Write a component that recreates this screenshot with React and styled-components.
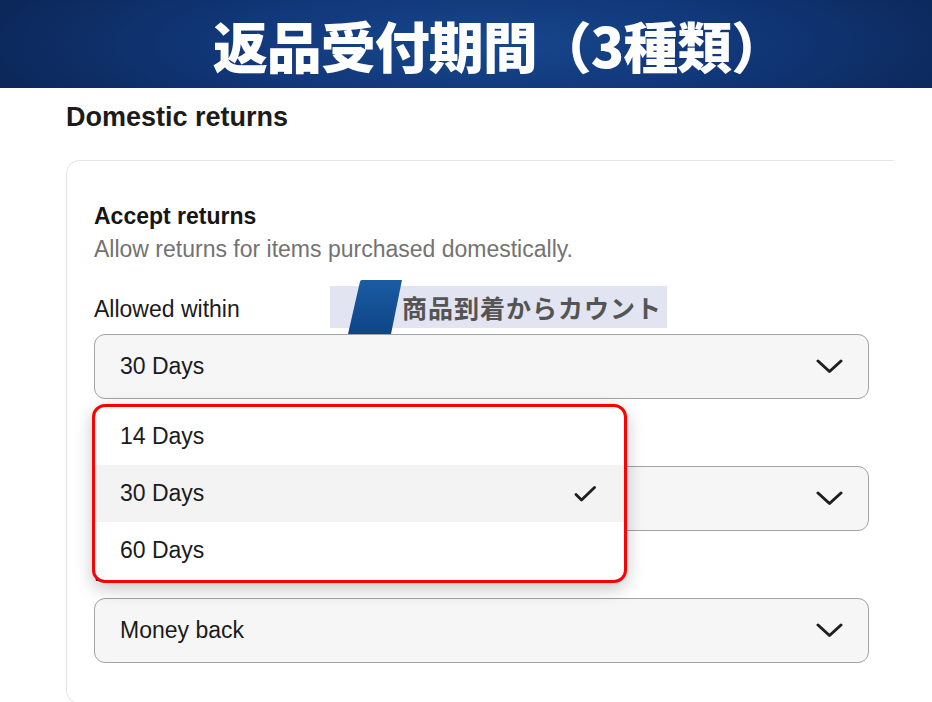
import React from "react";
import styled, { createGlobalStyle } from "styled-components";

const GlobalStyle = createGlobalStyle`
  html, body { margin: 0; padding: 0; background: #ffffff; }
  body { font-family: "Liberation Sans", Arial, sans-serif; color: #1b1b1b; }
  * { box-sizing: border-box; }
`;

const Page = styled.div`
  width: 932px;
  height: 702px;
  overflow: hidden;
  background: #fff;
`;

const Banner = styled.header`
  height: 88px;
  display: flex;
  align-items: center;
  justify-content: center;
  padding-left: 66px;
  background: radial-gradient(ellipse 60% 140% at 52% 50%, #17478d 0%, #11387a 45%, #0b2453 100%);
`;

const BannerTitle = styled.h1`
  margin: 0;
  font-family: "Noto Sans CJK JP", "Noto Sans", sans-serif;
  font-weight: 900;
  font-size: 55px;
  line-height: 1;
  color: #ffffff;
  letter-spacing: -1px;
`;

const Content = styled.main`
  padding: 13px 0 0 66px;
`;

const SectionHeading = styled.h2`
  margin: 0;
  font-size: 27px;
  line-height: 32px;
  font-weight: 700;
  color: #1b1b1b;
`;

const Card = styled.section`
  margin-top: 27px;
  width: 828px;
  border: 1.5px solid #e6e6e6;
  border-right: none;
  border-radius: 14px 0 0 14px;
  padding: 41px 0 40px 27px;
`;

const CardTitle = styled.h3`
  margin: 0;
  font-size: 23px;
  line-height: 28px;
  font-weight: 700;
  color: #151515;
`;

const CardDesc = styled.p`
  margin: 5px 0 0;
  font-size: 23px;
  line-height: 28px;
  color: #737373;
`;

const Fields = styled.div`
  margin-top: 32px;
  width: 775px;
  display: flex;
  flex-direction: column;
  gap: 28px;
`;

const Field = styled.div`
  position: relative;
  display: flex;
  flex-direction: column;
  gap: 11px;
`;

const FieldLabel = styled.label`
  font-size: 23px;
  line-height: 28px;
  color: #1b1b1b;
`;

const Select = styled.div`
  height: 65px;
  border: 1.5px solid #a3a3a3;
  border-radius: 11px;
  background: #f6f6f6;
  display: flex;
  align-items: center;
  justify-content: space-between;
  padding: 0 25px 0 25px;
  font-size: 23px;
  color: #1b1b1b;
`;

const Annotation = styled.div`
  position: absolute;
  z-index: 3;
  left: 236px;
  top: -9px;
  width: 337px;
  height: 42px;
  background: #e2e4f1;
  display: flex;
  align-items: center;
  padding-left: 72px;
  font-family: "Noto Sans CJK JP", sans-serif;
  font-weight: 700;
  font-size: 25px;
  letter-spacing: 1px;
  color: #545454;
`;

const Slash = styled.svg`
  position: absolute;
  left: 17px;
  top: -6px;
`;

const Dropdown = styled.ul`
  position: absolute;
  z-index: 4;
  left: -2px;
  top: 109px;
  width: 535px;
  margin: 0;
  padding: 1px 0;
  list-style: none;
  background: #fff;
  border: 3px solid #ff0000;
  border-radius: 13px;
  box-shadow: 0 6px 18px rgba(0, 0, 0, 0.22);
`;

const Option = styled.li`
  height: 57px;
  display: flex;
  align-items: center;
  justify-content: space-between;
  padding: 0 28px 0 25px;
  font-size: 23px;
  color: #1b1b1b;
  background: ${(p) => (p.$selected ? "#f3f3f3" : "transparent")};
`;

const Chevron = () => (
  <svg width="27" height="15" viewBox="0 0 27 15" fill="none">
    <polyline points="2,2 13.5,12.5 25,2" stroke="#1e1e1e" strokeWidth="3" strokeLinecap="round" strokeLinejoin="round" />
  </svg>
);

const Check = () => (
  <svg width="22" height="16" viewBox="0 0 22 16" fill="none">
    <polyline points="2,8.5 7.5,14 20.5,1.5" stroke="#1e1e1e" strokeWidth="2.8" strokeLinecap="round" strokeLinejoin="round" />
  </svg>
);

const options = ["14 Days", "30 Days", "60 Days"];

export default function App() {
  return (
    <Page>
      <GlobalStyle />
      <Banner>
        <BannerTitle>返品受付期間（3種類）</BannerTitle>
      </Banner>
      <Content>
        <SectionHeading>Domestic returns</SectionHeading>
        <Card>
          <CardTitle>Accept returns</CardTitle>
          <CardDesc>Allow returns for items purchased domestically.</CardDesc>
          <Fields>
            <Field>
              <FieldLabel>Allowed within</FieldLabel>
              <Select>
                <span>30 Days</span>
                <Chevron />
              </Select>
              <Annotation>
                <Slash width="56" height="55" viewBox="0 0 56 55">
                  <defs>
                    <linearGradient id="slashGrad" x1="0" y1="0" x2="0" y2="1">
                      <stop offset="0" stopColor="#1a5ca3" />
                      <stop offset="1" stopColor="#0f4488" />
                    </linearGradient>
                  </defs>
                  <path d="M13 1.5 Q13.4 0 15 0 L55 0 L44 54 L1 54 Z" fill="url(#slashGrad)" />
                </Slash>
                商品到着からカウント
              </Annotation>
              <Dropdown>
                {options.map((o) => (
                  <Option key={o} $selected={o === "30 Days"}>
                    <span>{o}</span>
                    {o === "30 Days" && <Check />}
                  </Option>
                ))}
              </Dropdown>
            </Field>
            <Field>
              <FieldLabel>Return shipping paid by</FieldLabel>
              <Select>
                <span>Buyer</span>
                <Chevron />
              </Select>
            </Field>
            <Field>
              <FieldLabel>Refund method</FieldLabel>
              <Select>
                <span>Money back</span>
                <Chevron />
              </Select>
            </Field>
          </Fields>
        </Card>
      </Content>
    </Page>
  );
}
